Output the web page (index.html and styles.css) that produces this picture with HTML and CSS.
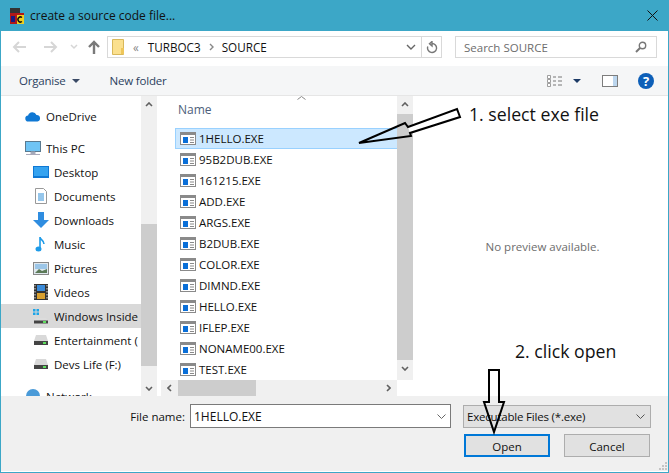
FILE: index.html
```html
<!DOCTYPE html>
<html lang="en">
<head>
    <meta charset="UTF-8">
    <meta name="viewport" content="width=device-width, initial-scale=1.0">
    <title>create a source code file...</title>
    <link rel="stylesheet" href="styles.css">
</head>
<body>
    <svg class="defs" width="0" height="0">
        <symbol id="exe" viewBox="0 0 16 13">
            <rect x="0.5" y="0.5" width="15" height="12" fill="#fff" stroke="#8a8a8a"/>
            <rect x="1" y="1" width="14" height="2" fill="#8a8a8a"/>
            <rect x="3" y="5" width="5" height="6" fill="#0a6fd8"/>
            <path d="M10 5.5h4M10 8h4M10 10.5h4" stroke="#8a8a8a"/>
        </symbol>
        <symbol id="drive" viewBox="0 0 16 12">
            <path d="M3 1h10l2 6H1z" fill="#d9d9d9"/>
            <rect x="1" y="7" width="14" height="4" fill="#444"/>
            <rect x="10" y="8" width="3" height="2" fill="#5fe05f"/>
        </symbol>
    </svg>

    <div class="dialog">
        <!-- Title bar -->
        <div class="titlebar">
            <svg class="app-icon" width="16" height="18" viewBox="0 0 16 18">
                <rect x="1" y="1" width="10" height="5" fill="#333"/>
                <rect x="1" y="6" width="14" height="11" fill="#b01818"/>
                <rect x="8" y="8" width="7" height="9" fill="#f0d020"/>
                <path d="M13 10.5a2.5 2.5 0 1 0 0 4" fill="none" stroke="#111" stroke-width="1.5"/>
                <rect x="2" y="9" width="4" height="6" fill="#1a1a80"/>
            </svg>
            <span class="title">create a source code file...</span>
            <svg class="close" width="11" height="11" viewBox="0 0 11 11">
                <path d="M.5.5l10 10M10.5.5l-10 10" stroke="#111" fill="none"/>
            </svg>
        </div>

        <!-- Navigation -->
        <div class="navbar">
            <svg class="nav-buttons" width="92" height="16" viewBox="0 0 92 16">
                <path d="M14 8H2M7 3L2 8l5 5" fill="none" stroke="#d6d6d6" stroke-width="2"/>
                <path d="M32 8h12M39 3l5 5-5 5" fill="none" stroke="#d6d6d6" stroke-width="2"/>
                <path d="M59 6l3 3 3-3" fill="none" stroke="#d6d6d6" stroke-width="1.5"/>
                <path d="M82 15V3M77 8l5-5 5 5" fill="none" stroke="#7a7a7a" stroke-width="2.4"/>
            </svg>
            <div class="address">
                <svg class="folder" width="13" height="16" viewBox="0 0 13 16">
                    <path d="M.5.5h11v15H.5z" fill="#fbe08e" stroke="#d9b85a"/>
                    <rect x="9" y="9" width="3" height="6" fill="#eec65a"/>
                </svg>
                <span class="crumb-mark">&laquo;</span>
                <span class="crumb">TURBOC3</span>
                <svg width="5" height="8" viewBox="0 0 5 8"><path d="M1 1l3 3-3 3" fill="none" stroke="#888" stroke-width="1.4"/></svg>
                <span class="crumb">SOURCE</span>
                <svg class="addr-chevron" width="10" height="6" viewBox="0 0 10 6"><path d="M1 1l4 4 4-4" fill="none" stroke="#666" stroke-width="1.4"/></svg>
                <div class="refresh">
                    <svg width="12" height="13" viewBox="0 0 12 13"><path d="M6 2.5a4.5 4.5 0 1 1-4.2 3M6 .5v4.5L3.5 2.7z" fill="none" stroke="#777" stroke-width="1.4"/></svg>
                </div>
            </div>
            <div class="search">
                <span>Search SOURCE</span>
                <svg width="12" height="12" viewBox="0 0 12 12"><circle cx="7.5" cy="4.5" r="3.2" fill="none" stroke="#777" stroke-width="1.4"/><path d="M5 7l-4 4" stroke="#777" stroke-width="2"/></svg>
            </div>
        </div>

        <!-- Toolbar -->
        <div class="toolbar">
            <span class="tool">Organise</span>
            <svg class="caret" width="8" height="4" viewBox="0 0 8 4"><path d="M0 0h8L4 4z" fill="#3a4a66"/></svg>
            <span class="tool new-folder">New folder</span>
            <svg class="views" width="16" height="12" viewBox="0 0 16 12">
                <path d="M.5.5h3v3h-3zM.5 4.5h3v3h-3zM.5 8.5h3v3h-3z" fill="#fff" stroke="#888" stroke-width=".8"/>
                <path d="M6 2h3M11 2h4M6 6h3M11 6h4M6 10h3M11 10h4" stroke="#777"/>
            </svg>
            <svg class="caret views-caret" width="8" height="4" viewBox="0 0 8 4"><path d="M0 0h8L4 4z" fill="#1c3a66"/></svg>
            <svg class="pane" width="16" height="12" viewBox="0 0 16 12">
                <rect x=".5" y=".5" width="15" height="11" fill="#fff" stroke="#7d7d7d"/>
                <rect x="11" y="1" width="4" height="10" fill="#bcd6ee"/>
            </svg>
            <svg class="help" width="16" height="16" viewBox="0 0 16 16">
                <circle cx="8" cy="8" r="8" fill="#0d5fb8"/>
                <text x="8" y="12.5" text-anchor="middle" class="help-mark">?</text>
            </svg>
        </div>

        <!-- Main area -->
        <div class="main">
            <div class="sidebar">
                <div class="nav-item top">
                    <svg width="16" height="11" viewBox="0 0 16 11"><path d="M3.5 10.5a3 3 0 0 1-.4-6A4.5 4.5 0 0 1 11.5 4a3.3 3.3 0 0 1 1 6.5z" fill="#0f78d4"/></svg>
                    <span>OneDrive</span>
                </div>
                <div class="nav-item pc">
                    <svg width="16" height="15" viewBox="0 0 16 15"><rect x=".5" y=".5" width="15" height="10" fill="#6fc4f5" stroke="#5a7a90"/><path d="M6 11h4v2H6zM1 13.5h14" fill="#9ab" stroke="#aab"/></svg>
                    <span>This PC</span>
                </div>
                <div class="nav-item child">
                    <svg width="16" height="12" viewBox="0 0 16 12"><rect width="16" height="12" fill="#0f78d4"/><rect x="1" y="1" width="14" height="9" fill="#35a3f0"/></svg>
                    <span>Desktop</span>
                </div>
                <div class="nav-item child">
                    <svg width="16" height="16" viewBox="0 0 16 16"><path d="M2.5.5h8l3 3v12h-11z" fill="#fff" stroke="#999"/><path d="M5 6h6M5 8h6M5 10h6M5 12h6" stroke="#2d8ed8"/></svg>
                    <span>Documents</span>
                </div>
                <div class="nav-item child">
                    <svg width="16" height="16" viewBox="0 0 16 16"><path d="M5 0h6v8h5l-8 8-8-8h5z" fill="#2f8de0"/></svg>
                    <span>Downloads</span>
                </div>
                <div class="nav-item child">
                    <svg width="16" height="16" viewBox="0 0 16 16"><ellipse cx="5.5" cy="13" rx="3" ry="2.5" fill="#1e9be8"/><path d="M7 13V1c0 3 4 3 4 7" fill="none" stroke="#1e9be8" stroke-width="1.6"/></svg>
                    <span>Music</span>
                </div>
                <div class="nav-item child">
                    <svg width="16" height="13" viewBox="0 0 16 13"><rect x=".5" y=".5" width="15" height="12" fill="#dfe8ee" stroke="#888"/><path d="M2 2h12v5H2z" fill="#9cc6e8"/><path d="M2 11l4-4 3 2 5-2v4z" fill="#5c7a58"/></svg>
                    <span>Pictures</span>
                </div>
                <div class="nav-item child">
                    <svg width="16" height="16" viewBox="-1 0 16 16"><rect width="14" height="16" fill="#333"/><rect x="3" y="1" width="8" height="6" fill="#3a8ad8"/><rect x="3" y="9" width="8" height="6" fill="#d8a030"/><path d="M1 1v14M13 1v14" stroke="#ddd" stroke-dasharray="1.5 1.5"/></svg>
                    <span>Videos</span>
                </div>
                <div class="nav-item child selected">
                    <svg width="16" height="16" viewBox="0 0 16 16"><path d="M0 1h2.500v2.500H0zM3.500 1H6v2.500H3.500zM0 4.500h2.500V7H0zM3.500 4.500H6V7H3.500z" fill="#1ea5e8"/><path d="M3 10h10l2 2.500v3H1v-3z" fill="#dcdcdc"/><rect x="1" y="12.500" width="14" height="3" fill="#444"/><rect x="10" y="13" width="3" height="2" fill="#5fe05f"/></svg>
                    <span>Windows Insider (C:)</span>
                </div>
                <div class="nav-item child">
                    <svg width="16" height="12" class="drive"><use href="#drive"/></svg>
                    <span>Entertainment (E:)</span>
                </div>
                <div class="nav-item child">
                    <svg width="16" height="12" class="drive"><use href="#drive"/></svg>
                    <span>Devs Life (F:)</span>
                </div>
                <div class="nav-item network">
                    <svg width="16" height="16" viewBox="0 0 16 16"><circle cx="8" cy="8" r="7" fill="#4a9ad8"/></svg>
                    <span>Network</span>
                </div>
            </div>
            <div class="side-scroll">
                <svg class="arrow" width="8" height="5" viewBox="0 0 8 5"><path d="M1 4l3-3 3 3" fill="none" stroke="#606060" stroke-width="1.6"/></svg>
                <div class="side-thumb"></div>
                <svg class="arrow arrow-down" width="8" height="5" viewBox="0 0 8 5"><path d="M1 1l3 3 3-3" fill="none" stroke="#606060" stroke-width="1.6"/></svg>
            </div>

            <div class="list-pane">
                <div class="list-body">
                    <div class="list-head">
                        <svg class="sort" width="9" height="4" viewBox="0 0 9 4"><path d="M.5 3.500l4-3 4 3" fill="none" stroke="#888"/></svg>
                        <span>Name</span>
                    </div>
                    <div class="file selected"><svg width="16" height="13"><use href="#exe"/></svg><span>1HELLO.EXE</span></div>
                    <div class="file"><svg width="16" height="13"><use href="#exe"/></svg><span>95B2DUB.EXE</span></div>
                    <div class="file"><svg width="16" height="13"><use href="#exe"/></svg><span>161215.EXE</span></div>
                    <div class="file"><svg width="16" height="13"><use href="#exe"/></svg><span>ADD.EXE</span></div>
                    <div class="file"><svg width="16" height="13"><use href="#exe"/></svg><span>ARGS.EXE</span></div>
                    <div class="file"><svg width="16" height="13"><use href="#exe"/></svg><span>B2DUB.EXE</span></div>
                    <div class="file"><svg width="16" height="13"><use href="#exe"/></svg><span>COLOR.EXE</span></div>
                    <div class="file"><svg width="16" height="13"><use href="#exe"/></svg><span>DIMND.EXE</span></div>
                    <div class="file"><svg width="16" height="13"><use href="#exe"/></svg><span>HELLO.EXE</span></div>
                    <div class="file"><svg width="16" height="13"><use href="#exe"/></svg><span>IFLEP.EXE</span></div>
                    <div class="file"><svg width="16" height="13"><use href="#exe"/></svg><span>NONAME00.EXE</span></div>
                    <div class="file"><svg width="16" height="13"><use href="#exe"/></svg><span>TEST.EXE</span></div>
                </div>
                <div class="h-scroll">
                    <svg width="5" height="8" viewBox="0 0 5 8"><path d="M4 1L1 4l3 3" fill="none" stroke="#606060" stroke-width="1.6"/></svg>
                    <div class="h-thumb"></div>
                    <svg width="5" height="8" viewBox="0 0 5 8"><path d="M1 1l3 3-3 3" fill="none" stroke="#606060" stroke-width="1.6"/></svg>
                </div>
            </div>
            <div class="list-scroll">
                <svg class="arrow" width="8" height="5" viewBox="0 0 8 5"><path d="M1 4l3-3 3 3" fill="none" stroke="#606060" stroke-width="1.6"/></svg>
                <div class="list-thumb"></div>
                <svg class="arrow" width="8" height="5" viewBox="0 0 8 5"><path d="M1 1l3 3 3-3" fill="none" stroke="#606060" stroke-width="1.6"/></svg>
            </div>

            <div class="preview">No preview available.</div>
        </div>

        <!-- File name and buttons -->
        <div class="footer">
            <div class="footer-row">
                <label class="name-label">File name:</label>
                <div class="name-input">
                    <span>1HELLO.EXE</span>
                    <svg width="9" height="5" viewBox="0 0 9 5"><path d="M.5.5l4 4 4-4" fill="none" stroke="#666"/></svg>
                </div>
                <div class="filter">
                    <span>Executable Files (*.exe)</span>
                    <svg width="9" height="5" viewBox="0 0 9 5"><path d="M.5.5l4 4 4-4" fill="none" stroke="#555"/></svg>
                </div>
            </div>
            <div class="button-row">
                <button class="btn primary">Open</button>
                <button class="btn">Cancel</button>
            </div>
            <svg class="grip" width="10" height="10" viewBox="0 0 10 10">
                <path d="M7 1h2v2H7zM4 4h2v2H4zM7 4h2v2H7zM1 7h2v2H1zM4 7h2v2H4zM7 7h2v2H7z" fill="#c4c4c4"/>
            </svg>
        </div>

        <!-- Annotations drawn on top of the dialog -->
        <span class="note note-one">1. select exe file</span>
        <span class="note note-two">2. click open</span>
        <svg class="marks" width="669" height="473" viewBox="0 0 669 473">
            <path d="M408 127L457 109L460 117L410 133Z" fill="#fff"/>
            <path d="M359 143L405 123L408 127L457 109L460 117L410 133L411 136Z" fill="none" stroke="#000" stroke-width="2"/>
            <path d="M489 370H499V402H504L494 432L484 402H489Z" fill="none" stroke="#000" stroke-width="2"/>
        </svg>
    </div>
</body>
</html>
```

FILE: styles.css
```css
/* Global Styles */
html, body {
    margin: 0;
    padding: 0;
}

body {
    font-family: 'Open Sans', 'Noto Sans', sans-serif;
    font-size: 11.5px;
    color: #111;
    background-color: #fff;
}

.defs {
    position: absolute;
}

.dialog {
    position: relative;
    box-sizing: border-box;
    width: 669px;
    height: 473px;
    border: 1px solid #3ca7c7;
    border-top: 0;
    display: flex;
    flex-direction: column;
    overflow: hidden;
}

/* Title bar */
.titlebar {
    height: 31px;
    flex: none;
    background-color: #3ca7c7;
    display: flex;
    align-items: center;
    padding: 0 10px 0 8px;
}

.app-icon {
    margin-right: 5px;
}

.title {
    font-size: 12px;
    flex: 1;
}

/* Navigation */
.navbar {
    height: 35px;
    flex: none;
    display: flex;
    align-items: center;
    gap: 13px;
    padding-left: 11px;
    padding-bottom: 3px;
    box-sizing: border-box;
}

.nav-buttons {
    overflow: visible;
}

.address {
    box-sizing: border-box;
    width: 335px;
    height: 22px;
    margin-left: -10px;
    border: 1px solid #d9d9d9;
    display: flex;
    align-items: center;
    padding-left: 4px;
    font-size: 11.7px;
}

.crumb-mark {
    margin: 0 9px 0 8px;
    color: #888;
}

.crumb {
    margin-right: 8px;
}

.address svg + .crumb {
    margin-left: 8px;
}

.addr-chevron {
    margin-left: auto;
    margin-right: 5px;
}

.refresh {
    width: 19px;
    height: 20px;
    border-left: 1px solid #d9d9d9;
    display: flex;
    align-items: center;
    justify-content: center;
}

.search {
    box-sizing: border-box;
    width: 202px;
    height: 22px;
    border: 1px solid #d9d9d9;
    display: flex;
    align-items: center;
    justify-content: space-between;
    padding: 0 9px 0 8px;
    color: #6d6d6d;
    margin-left: 0;
}

/* Toolbar */
.toolbar {
    height: 30px;
    flex: none;
    background-color: #f5f6f7;
    border-bottom: 1px solid #e6e6e6;
    box-sizing: border-box;
    display: flex;
    align-items: center;
    padding-left: 18px;
}

.tool {
    color: #2b3f5e;
    letter-spacing: -0.2px;
}

.caret {
    margin-left: 6px;
}

.new-folder {
    margin-left: 30px;
}

.views {
    margin-left: auto;
}

.views-caret {
    margin-left: 10px;
}

.pane {
    margin-left: 21px;
}

.help {
    margin-left: 20px;
    margin-right: 14px;
}

.help-mark {
    font-family: 'Open Sans', sans-serif;
    font-size: 13px;
    font-weight: 700;
    fill: #fff;
}

/* Main area */
.main {
    flex: 1;
    display: flex;
    min-height: 0;
}

.sidebar {
    width: 140px;
    flex: none;
    overflow: hidden;
    white-space: nowrap;
}

.nav-item {
    height: 24px;
    display: flex;
    align-items: center;
    gap: 5px;
    padding-left: 24px;
}

.nav-item svg {
    flex: none;
}

.nav-item span {
    max-width: 84px;
    overflow: hidden;
}

.nav-item.top {
    margin-top: 8px;
    margin-bottom: 8px;
}

.nav-item.child {
    padding-left: 32px;
}

.nav-item.selected {
    background-color: #d9d9d9;
}

.nav-item.network {
    margin-top: 8px;
}

.side-scroll,
.list-scroll {
    width: 16px;
    flex: none;
    background-color: #f0f0f0;
    display: flex;
    flex-direction: column;
    align-items: center;
}

.side-scroll {
    border-right: 0;
    margin-right: 2px;
}

.arrow {
    flex: none;
    margin: 6px 0;
}

.side-thumb {
    width: 100%;
    height: 142px;
    margin-top: 111px;
    background-color: #cdcdcd;
}

.arrow-down {
    margin-top: auto;
    margin-bottom: 5px;
}

.list-pane {
    width: 238px;
    flex: none;
    display: flex;
    flex-direction: column;
}

.list-body {
    flex: 1;
    padding-left: 16px;
    min-height: 0;
}

.list-head {
    height: 32px;
    position: relative;
    color: #4c607a;
    box-sizing: border-box;
    padding: 5px 0 0 3px;
    font-size: 12px;
}

.sort {
    position: absolute;
    left: 122px;
    top: 0;
}

.file {
    height: 21px;
    box-sizing: border-box;
    display: flex;
    align-items: center;
    gap: 3px;
    padding-left: 4px;
    border: 1px solid transparent;
    border-right: 0;
}

.file.selected {
    background-color: #cce8ff;
    border-color: #99d1ff;
}

.h-scroll {
    height: 16px;
    flex: none;
    margin-left: 2px;
    background-color: #f0f0f0;
    display: flex;
    align-items: center;
    padding-left: 6px;
    padding-right: 6px;
}

.h-thumb {
    width: 78px;
    height: 100%;
    margin-left: 6px;
    margin-right: auto;
    background-color: #cdcdcd;
}

.list-scroll {
    height: 284px;
}

.list-thumb {
    width: 100%;
    height: 246px;
    background-color: #cdcdcd;
    margin-top: 1px;
}

.preview {
    flex: 1;
    display: flex;
    align-items: center;
    justify-content: center;
    color: #6d6d6d;
    padding: 0 0 0 4px;
}

/* File name and buttons */
.footer {
    height: 75px;
    flex: none;
    position: relative;
    background-color: #f0f0f0;
    box-sizing: border-box;
    padding-top: 8px;
    margin-bottom: 1px;
}

.footer-row {
    display: flex;
    align-items: center;
    height: 24px;
}

.name-label {
    width: 184px;
    text-align: right;
    margin-right: 5px;
    flex: none;
}

.name-input {
    box-sizing: border-box;
    width: 261px;
    height: 24px;
    background-color: #fff;
    border: 1px solid #7a7a7a;
    display: flex;
    align-items: center;
    justify-content: space-between;
    padding: 0 4px 0 3px;
    font-size: 12px;
}

.filter {
    box-sizing: border-box;
    width: 188px;
    height: 23px;
    margin-left: 12px;
    background-color: #e1e1e1;
    border: 1px solid #adadad;
    display: flex;
    align-items: center;
    justify-content: space-between;
    padding: 0 5px 0 3px;
    letter-spacing: -0.2px;
}

.button-row {
    display: flex;
    gap: 14px;
    margin: 6px 0 0 463px;
}

.btn {
    box-sizing: border-box;
    width: 86px;
    height: 23px;
    padding: 1px 0 0;
    font: inherit;
    color: #111;
    background-color: #e1e1e1;
    border: 1px solid #adadad;
}

.btn.primary {
    border: 2px solid #0078d7;
}

.grip {
    position: absolute;
    right: 0;
    bottom: 0;
}

/* Annotations */
.note {
    position: absolute;
    font-size: 17.7px;
    line-height: 24px;
    color: #111;
    white-space: nowrap;
}

.note-one {
    left: 468px;
    top: 102px;
}

.note-two {
    left: 514px;
    top: 339px;
}

.marks {
    position: absolute;
    left: -1px;
    top: 0;
    pointer-events: none;
}
```
